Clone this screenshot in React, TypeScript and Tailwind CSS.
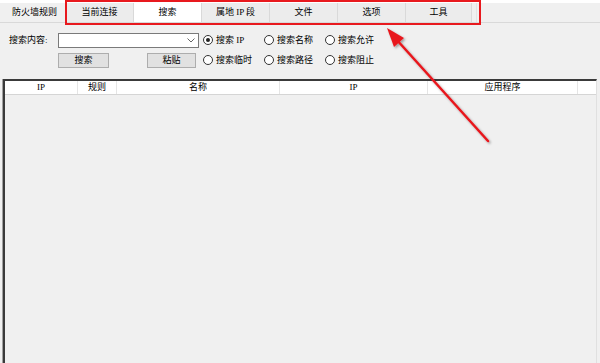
import React from 'react';

const tabs = ['当前连接', '搜索', '属地 IP 段', '文件', '选项', '工具'];

const Radio: React.FC<{ label: string; checked?: boolean }> = ({ label, checked }) => (
  <div className="flex items-center w-[61px] shrink-0">
    <span className="w-[10px] h-[10px] rounded-full border border-[#333] bg-white flex items-center justify-center shrink-0">
      {checked && <span className="w-[4px] h-[4px] rounded-full bg-[#222]" />}
    </span>
    <span className="ml-[3px] whitespace-nowrap">{label}</span>
  </div>
);

const Button: React.FC<{ label: string; width: string }> = ({ label, width }) => (
  <div className={`${width} h-[15px] bg-[#e1e1e1] border border-[#adadad] flex items-center justify-center shrink-0`}>
    {label}
  </div>
);

const columns = [
  { label: 'IP', w: 'w-[73px]' },
  { label: '规则', w: 'w-[39px]' },
  { label: '名称', w: 'w-[163px]' },
  { label: 'IP', w: 'w-[148px]' },
  { label: '应用程序', w: 'w-[150px]' },
];

export default function App() {
  return (
    <div
      className="relative w-[600px] h-[363px] overflow-hidden bg-[#f0f0f0] text-[9px] leading-none text-black flex flex-col"
      style={{ fontFamily: '"Liberation Serif", "Noto Sans CJK SC", serif' }}
    >
      {/* tab strip */}
      <div className="h-[23px] bg-white pt-[3px] shrink-0">
        <div className="h-[20px] flex bg-[#f0f0f0] border-b border-[#d9d9d9]">
          <div className="w-[66px] pl-[4px] flex items-center justify-center border-r border-[#d9d9d9]">防火墙规则</div>
          {tabs.map((t, i) => (
            <div
              key={t}
              className={`${i === 5 ? 'w-[66px]' : 'w-[68px]'} flex items-center justify-center border-r border-[#d9d9d9] ${
                i === 1 ? 'bg-white' : 'bg-[#ececec]'
              }`}
            >
              {t}
            </div>
          ))}
          <div className="flex-1 border-l border-[#e3e3e3] ml-[4px]" />
        </div>
      </div>

      {/* search row 1 */}
      <div className="flex items-center mt-[9px] pl-[9px] h-[16px] shrink-0">
        <div className="w-[49px]">搜索内容:</div>
        <div className="w-[141px] h-[15px] bg-white border border-[#7a7a7a] flex items-center justify-end pr-[3px] shrink-0">
          <svg width="8" height="5" viewBox="0 0 8 5">
            <path d="M0.5 0.5 L4 4 L7.5 0.5" fill="none" stroke="#666" strokeWidth="1" />
          </svg>
        </div>
        <div className="w-[4px]" />
        <Radio label="搜索 IP" checked />
        <Radio label="搜索名称" />
        <Radio label="搜索允许" />
      </div>

      {/* search row 2 */}
      <div className="flex items-center mt-[4px] pl-[58px] h-[16px] shrink-0">
        <Button label="搜索" width="w-[51px]" />
        <div className="w-[38px]" />
        <Button label="粘贴" width="w-[49px]" />
        <div className="w-[7px]" />
        <Radio label="搜索临时" />
        <Radio label="搜索路径" />
        <Radio label="搜索阻止" />
      </div>

      {/* table */}
      <div className="flex-1 mt-[11px] ml-[2px] mr-[3px] border-l border-[#a0a0a0] flex flex-col">
        <div className="flex-1 border-l-2 border-t-2 border-[#3a3a3a] border-r border-r-[#e0e0e0] flex flex-col">
          <div className="h-[14px] bg-white flex border-b border-[#d5d5d5] shrink-0">
            {columns.map((c, i) => (
              <div key={i} className={`${c.w} flex items-center justify-center border-r border-[#e5e5e5] shrink-0`}>
                {c.label}
              </div>
            ))}
            <div className="flex-1" />
          </div>
          <div className="flex-1 bg-[#f0f0f0]" />
        </div>
      </div>

      {/* annotation: red box */}
      <div className="absolute left-[65px] top-0 w-[416px] h-[25px] border-2 border-[#e8191e]" />

      {/* annotation: red arrow */}
      <svg className="absolute left-0 top-0 pointer-events-none" width="600" height="363">
        <defs>
          <filter id="sh" x="-20%" y="-20%" width="140%" height="140%">
            <feDropShadow dx="1.5" dy="1.5" stdDeviation="1" floodColor="#000" floodOpacity="0.35" />
          </filter>
        </defs>
        <g filter="url(#sh)">
          <line x1="488" y1="141" x2="396" y2="39" stroke="#e8191e" strokeWidth="2.5" strokeLinecap="round" />
          <polygon points="387,28 404,38 394,47" fill="#e8191e" />
        </g>
      </svg>
    </div>
  );
}
